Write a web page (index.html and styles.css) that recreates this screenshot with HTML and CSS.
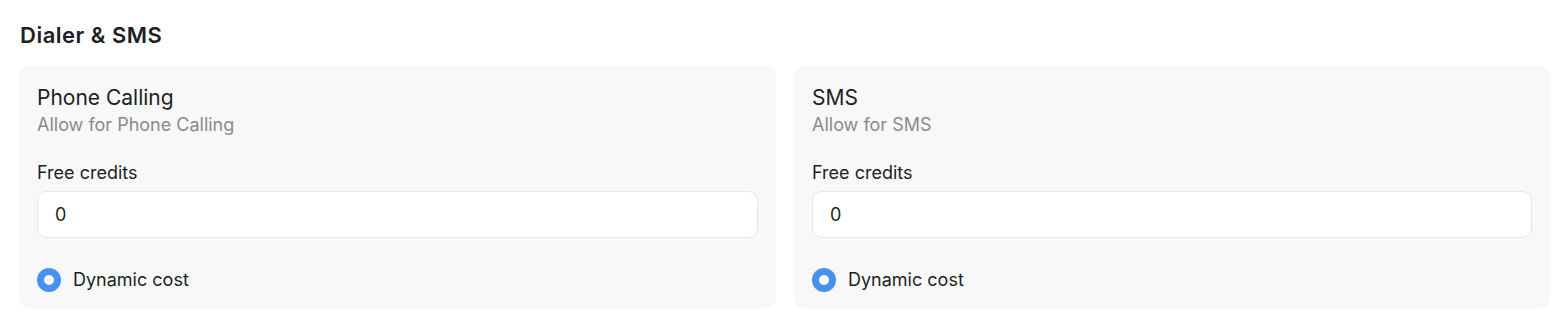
FILE: index.html
```html
<!DOCTYPE html>
<html>
<head>
<meta charset="utf-8">
<link rel="stylesheet" href="styles.css">
</head>
<body>
<section class="section">
  <h2 class="section-title">Dialer &amp; SMS</h2>
  <div class="cards">
    <div class="card">
      <div class="card-title">Phone Calling</div>
      <div class="card-sub">Allow for Phone Calling</div>
      <label class="field-label">Free credits</label>
      <div class="input">0</div>
      <div class="radio-row">
        <span class="radio"></span>
        <span class="radio-label">Dynamic cost</span>
      </div>
    </div>
    <div class="card">
      <div class="card-title">SMS</div>
      <div class="card-sub">Allow for SMS</div>
      <label class="field-label">Free credits</label>
      <div class="input">0</div>
      <div class="radio-row">
        <span class="radio"></span>
        <span class="radio-label">Dynamic cost</span>
      </div>
    </div>
  </div>
</section>
</body>
</html>
```
FILE: styles.css
```css
* { box-sizing: border-box; }
html, body { margin: 0; padding: 0; background: #ffffff; }
body {
  font-family: Inter, "Noto Sans", sans-serif;
  font-optical-sizing: none;
  color: #1d1f22;
}
.section {
  padding: 20px 18px 0 19px;
}
.section-title {
  margin: 0;
  font-size: 22px;
  line-height: 30px;
  font-weight: 600;
  letter-spacing: 0.5px;
  color: #1d2025;
  padding-left: 1px;
}
.cards {
  margin-top: 15px;
  display: grid;
  grid-template-columns: 757px 756px;
  gap: 18px;
}
.card {
  background: #f8f8f8;
  border-radius: 12px;
  padding: 21px 18px 0 18px;
  height: 244px;
  display: flex;
  flex-direction: column;
}
.card-title {
  font-size: 21px;
  line-height: 24px;
  color: #1d1f22;
}
.card-sub {
  font-size: 18px;
  line-height: 22px;
  color: #8a8a8c;
  margin-top: 4px;
}
.field-label {
  font-size: 18px;
  line-height: 22px;
  margin-top: 26px;
  color: #1d1f22;
}
.input {
  margin-top: 7px;
  height: 47px;
  background: #ffffff;
  border: 1px solid #e6e6e6;
  border-radius: 10px;
  padding-left: 17px;
  display: flex;
  align-items: center;
  font-size: 18px;
  color: #1d1f22;
}
.radio-row {
  margin-top: 30px;
  display: flex;
  align-items: center;
  gap: 12px;
}
.radio {
  width: 24px;
  height: 24px;
  border-radius: 50%;
  border: 7px solid #4592f0;
  background: #ffffff;
  flex: none;
}
.radio-label {
  font-size: 18px;
  line-height: 24px;
  color: #1d1f22;
}
```
